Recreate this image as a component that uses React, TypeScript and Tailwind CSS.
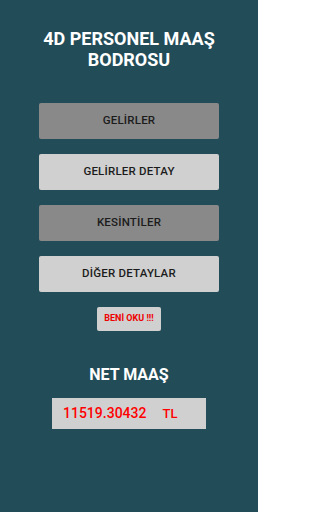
const menu = [
  { label: "GELİRLER", dark: true },
  { label: "GELİRLER DETAY", dark: false },
  { label: "KESİNTİLER", dark: true },
  { label: "DİĞER DETAYLAR", dark: false },
];

export default function App() {
  return (
    <div
      className="flex h-[512px] w-[258px] flex-col items-center bg-[#224c58]"
      style={{ fontFamily: "Roboto, 'Liberation Sans', sans-serif" }}
    >
      <h1 className="mt-[28px] text-center text-[18px] font-bold leading-[21px] text-white">
        4D PERSONEL MAAŞ
        <br />
        BODROSU
      </h1>

      <div className="mt-[33px] flex flex-col gap-[15px]">
        {menu.map((m) => (
          <button
            key={m.label}
            className={`flex h-[36px] w-[180px] items-center justify-center rounded-[2px] text-[11.5px] font-medium tracking-[0.2px] text-[#1c1c1c] ${m.dark ? "bg-[#898989]" : "bg-[#d0d0d0]"}`}
          >
            {m.label}
          </button>
        ))}
      </div>

      <button className="mt-[15px] flex h-[24px] w-[64px] items-center justify-center rounded-[2px] bg-[#d0d0d0] text-[9px] font-bold text-[#ee0000]">
        BENİ OKU !!!
      </button>

      <div className="mt-[34px] text-[16px] font-bold leading-[20px] text-white">NET MAAŞ</div>

      <div className="mt-[13px] flex h-[31px] w-[154px] items-center bg-[#d0d0d0] pl-[11px]">
        <span className="text-[14px] font-medium text-[#ff0000]">11519.30432</span>
        <span className="ml-[16px] text-[13px] font-medium text-[#ff0000]">TL</span>
      </div>
    </div>
  );
}
